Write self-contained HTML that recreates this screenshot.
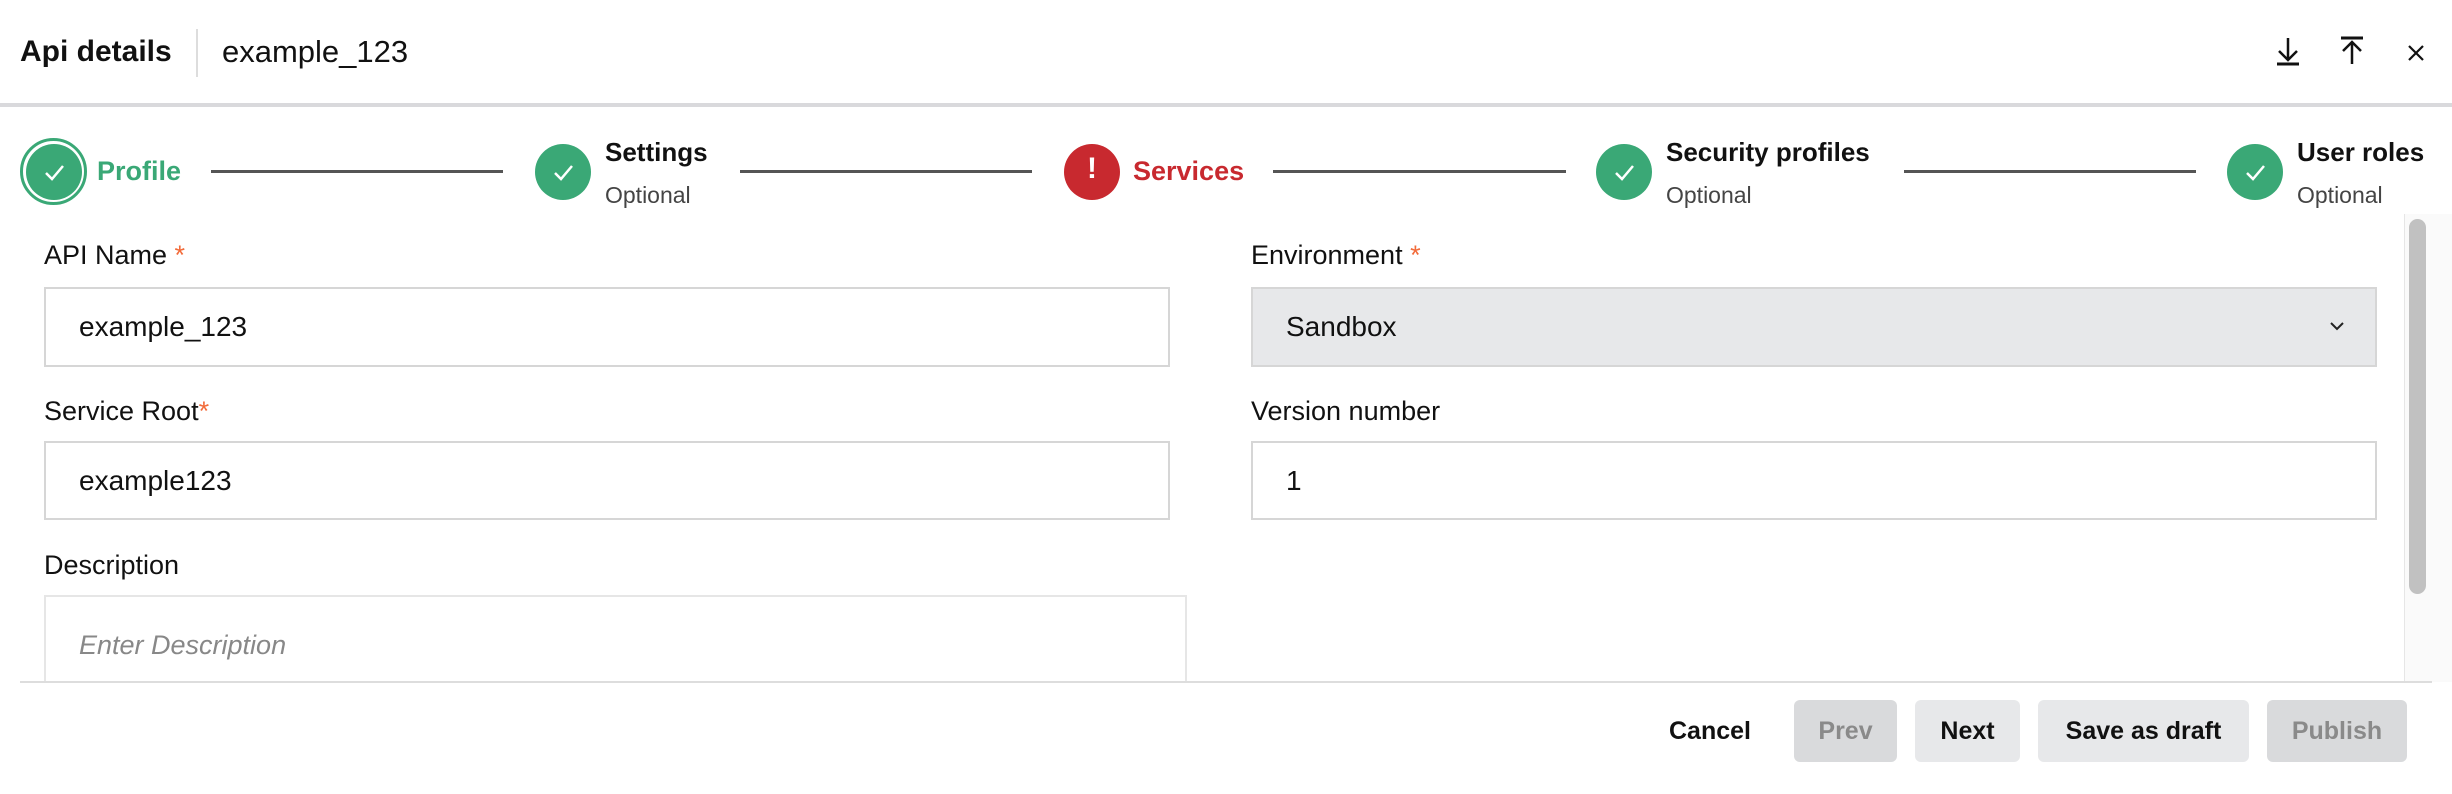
<!DOCTYPE html>
<html><head><meta charset="utf-8"><style>
*{margin:0;padding:0;box-sizing:border-box}
body{width:2452px;height:794px;overflow:hidden;background:#fff;font-family:"Liberation Sans",Arial,sans-serif;color:#111;position:relative}
.a{position:absolute;white-space:nowrap}
.circ{position:absolute;width:56px;height:56px;border-radius:50%;background:#3aa876;top:144px}
.line{position:absolute;height:3px;background:#555;top:170px}
.st{font-size:26px;font-weight:bold;top:137px}
.opt{font-size:23px;color:#444;top:182px}
.lbl{font-size:27px;top:239px;line-height:32px}
.req{color:#f26b3a}
.inp{position:absolute;border:2px solid #d6d6d6;background:#fff;font-size:28px;padding-left:33px;display:flex;align-items:center}
.btn{position:absolute;top:700px;height:62px;border-radius:6px;font-size:25px;font-weight:bold;display:flex;align-items:center;justify-content:center}
</style></head><body>
<div class="a" style="left:20px;top:35px;font-size:30px;font-weight:bold">Api details</div>
<div class="a" style="left:196px;top:29px;width:2px;height:48px;background:#ddd"></div>
<div class="a" style="left:222px;top:34px;font-size:31px">example_123</div>
<svg class="a" style="left:2272px;top:36px" width="32" height="30" viewBox="0 0 32 30"><path d="M16 2V24M7 15l9 9 9-9" fill="none" stroke="#111" stroke-width="2.5"/><path d="M5 28H27" stroke="#111" stroke-width="3"/></svg>
<svg class="a" style="left:2336px;top:36px" width="32" height="30" viewBox="0 0 32 30"><path d="M16 28V6M7 15l9-9 9 9" fill="none" stroke="#111" stroke-width="2.5"/><path d="M5 2H27" stroke="#111" stroke-width="3"/></svg>
<svg class="a" style="left:2406px;top:43px" width="20" height="20" viewBox="0 0 20 20"><path d="M3 3L17 17M17 3L3 17" stroke="#111" stroke-width="2.2"/></svg>
<div class="a" style="left:0;top:103px;width:2452px;height:4px;background:#d9d9dc"></div>

<div class="a" style="left:20px;top:138px;width:67px;height:67px;border-radius:50%;border:3px solid #3aa876;background:#fff"></div>
<div class="circ" style="left:26px"></div>
<div class="circ" style="left:535px"></div>
<div class="circ" style="left:1064px;background:#c8292f"></div>
<div class="circ" style="left:1596px"></div>
<div class="circ" style="left:2227px"></div>
<svg class="a" style="left:26px;top:144px" width="56" height="56"><path d="M20 29l6 6 11-13" fill="none" stroke="#fff" stroke-width="2.5"/></svg>
<svg class="a" style="left:535px;top:144px" width="56" height="56"><path d="M20 29l6 6 11-13" fill="none" stroke="#fff" stroke-width="2.5"/></svg>
<svg class="a" style="left:1596px;top:144px" width="56" height="56"><path d="M20 29l6 6 11-13" fill="none" stroke="#fff" stroke-width="2.5"/></svg>
<svg class="a" style="left:2227px;top:144px" width="56" height="56"><path d="M20 29l6 6 11-13" fill="none" stroke="#fff" stroke-width="2.5"/></svg>
<div class="a" style="left:1064px;top:152px;width:56px;text-align:center;color:#fff;font-size:30px;font-weight:bold">!</div>

<div class="a st" style="left:97px;top:156px;color:#3aa876;font-size:27px">Profile</div>
<div class="line" style="left:211px;width:292px"></div>
<div class="a st" style="left:605px">Settings</div><div class="a opt" style="left:605px">Optional</div>
<div class="line" style="left:740px;width:292px"></div>
<div class="a st" style="left:1133px;top:156px;color:#c8292f;font-size:27px">Services</div>
<div class="line" style="left:1273px;width:293px"></div>
<div class="a st" style="left:1666px">Security profiles</div><div class="a opt" style="left:1666px">Optional</div>
<div class="line" style="left:1904px;width:292px"></div>
<div class="a st" style="left:2297px">User roles</div><div class="a opt" style="left:2297px">Optional</div>

<div class="a lbl" style="left:44px">API Name <span class="req">*</span></div>
<div class="inp" style="left:44px;top:287px;width:1126px;height:80px">example_123</div>
<div class="a lbl" style="left:44px;top:395px">Service Root<span class="req">*</span></div>
<div class="inp" style="left:44px;top:441px;width:1126px;height:79px">example123</div>
<div class="a lbl" style="left:44px;top:549px">Description</div>
<div class="inp" style="left:44px;top:595px;width:1143px;height:100px;border-color:#e6e6e6;align-items:flex-start;padding-top:33px;color:#888;font-style:italic;font-size:27px">Enter Description</div>

<div class="a lbl" style="left:1251px">Environment <span class="req">*</span></div>
<div class="inp" style="left:1251px;top:287px;width:1126px;height:80px;background:#e7e8ea">Sandbox</div>
<svg class="a" style="left:2328px;top:320px" width="18" height="12"><path d="M3 3l6 6 6-6" fill="none" stroke="#222" stroke-width="2"/></svg>
<div class="a lbl" style="left:1251px;top:395px">Version number</div>
<div class="inp" style="left:1251px;top:441px;width:1126px;height:79px">1</div>

<div class="a" style="left:2404px;top:214px;width:48px;height:468px;background:#fafafa;border-left:1px solid #e6e6e6"></div>
<div class="a" style="left:2409px;top:219px;width:17px;height:375px;border-radius:9px;background:#c1c1c1"></div>

<div class="a" style="left:0;top:682px;width:2452px;height:112px;background:#fff"></div>
<div class="a" style="left:20px;top:681px;width:2412px;height:2px;background:#ddd"></div>
<div class="btn" style="left:1662px;width:96px">Cancel</div>
<div class="btn" style="left:1794px;width:103px;background:#d9dadc;color:#8a8a8a">Prev</div>
<div class="btn" style="left:1915px;width:105px;background:#e7e8ea">Next</div>
<div class="btn" style="left:2038px;width:211px;background:#e7e8ea">Save as draft</div>
<div class="btn" style="left:2267px;width:140px;background:#d9dadc;color:#8a8a8a">Publish</div>
</body></html>
